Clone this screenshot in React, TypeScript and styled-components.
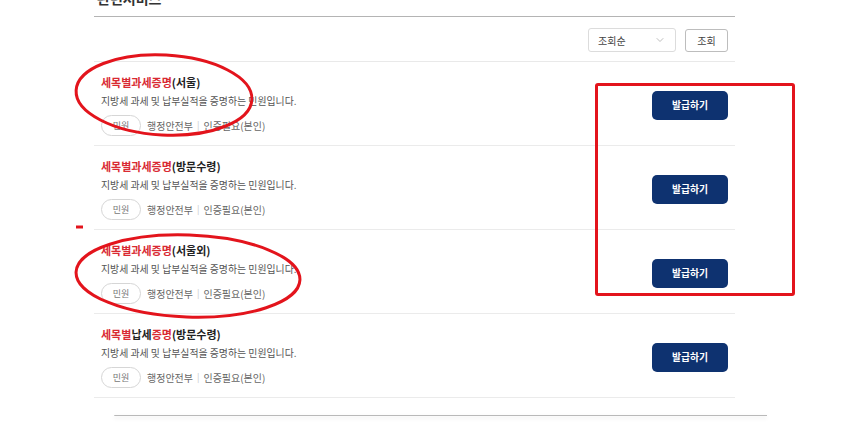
import { FC } from 'react';
import styled, { createGlobalStyle } from 'styled-components';
import { ChevronDown } from 'lucide-react';

const GlobalStyle = createGlobalStyle`
	html, body {
		margin: 0;
		padding: 0;
		background: #ffffff;
		overflow: hidden;
	}
	body {
		font-family: 'Noto Sans CJK KR', 'Noto Sans', sans-serif;
		color: #222;
	}
`;

interface ServiceItem {
	red: string;
	mid?: string;
	redTail?: string;
	rest: string;
}

const services: ServiceItem[] = [
	{ red: '세목별과세증명', rest: '(서울)' },
	{ red: '세목별과세증명', rest: '(방문수령)' },
	{ red: '세목별과세증명', rest: '(서울외)' },
	{ red: '세목별', mid: '납세', redTail: '증명', rest: '(방문수령)' },
];

const App: FC = () => {
	return (
		<>
			<GlobalStyle />
			<Page>
				<Content>
					<Heading>관련서비스</Heading>
					<Toolbar>
						<Select>
							<span>조회순</span>
							<ChevronDown size={12} strokeWidth={1.5} color="#a8a8a8" />
						</Select>
						<SearchButton>조회</SearchButton>
					</Toolbar>
					<List>
						{services.map((s, i) => (
							<Row key={i}>
								<Info>
									<Title>
										<Red>{s.red}</Red>
										{s.mid}
										{s.redTail && <Red>{s.redTail}</Red>}
										{s.rest}
									</Title>
									<Desc>지방세 과세 및 납부실적을 증명하는 민원입니다.</Desc>
									<Meta>
										<Badge>민원</Badge>
										<MetaText>행정안전부</MetaText>
										<Divider>|</Divider>
										<MetaText>인증필요(본인)</MetaText>
									</Meta>
								</Info>
								<IssueButton>발급하기</IssueButton>
							</Row>
						))}
					</List>
				</Content>
				<CardEdge />
				<Annotations width="865" height="429" viewBox="0 0 865 429">
					<ellipse cx="164" cy="95" rx="88" ry="40" transform="rotate(3 164 95)" />
					<ellipse cx="188" cy="276" rx="112" ry="41" transform="rotate(2 188 276)" />
					<rect x="596.5" y="84.5" width="197" height="210" rx="1.5" />
					<line x1="76" y1="227" x2="83" y2="227" />
				</Annotations>
			</Page>
		</>
	);
};

const Page = styled.div`
	position: relative;
	width: 865px;
	height: 429px;
	overflow: hidden;
	padding-left: 94px;
	box-sizing: border-box;
`;

const Content = styled.div`
	width: 641px;
`;

const Heading = styled.h2`
	margin: -12px 0 0 0;
	padding: 0 0 0 3px;
	font-size: 14px;
	line-height: 20px;
	height: 28px;
	font-weight: 700;
	color: #333;
	border-bottom: 1px solid #b4b4b4;
`;

const Toolbar = styled.div`
	display: flex;
	justify-content: flex-end;
	align-items: center;
	gap: 9px;
	padding: 11px 7px 9px 0;
	border-bottom: 1px solid #e9e9e9;
`;

const Select = styled.div`
	box-sizing: border-box;
	width: 88px;
	height: 24px;
	border: 1px solid #dcdcdc;
	border-radius: 3px;
	display: flex;
	align-items: center;
	justify-content: space-between;
	padding: 0 9px 0 9px;
	font-size: 10px;
	color: #444;
`;

const SearchButton = styled.button`
	box-sizing: border-box;
	width: 43px;
	height: 23px;
	border: 1px solid #bdbdbd;
	border-radius: 3px;
	background: #fff;
	font-family: inherit;
	font-size: 10px;
	color: #444;
	padding: 0;
`;

const List = styled.ul`
	list-style: none;
	margin: 0;
	padding: 0;
`;

const Row = styled.li`
	display: flex;
	align-items: center;
	justify-content: space-between;
	padding: 12px 7px 9px 7px;
	border-bottom: 1px solid #ebebeb;
`;

const Info = styled.div`
	display: flex;
	flex-direction: column;
`;

const Title = styled.div`
	font-size: 11px;
	line-height: 16px;
	font-weight: 700;
	color: #222;
`;

const Red = styled.span`
	color: #d92a33;
`;

const Desc = styled.p`
	margin: 3px 0 0 0;
	font-size: 9.9px;
	line-height: 16px;
	color: #555;
`;

const Meta = styled.div`
	display: flex;
	align-items: center;
	margin-top: 6px;
	font-size: 10px;
	color: #666;
`;

const Badge = styled.span`
	box-sizing: border-box;
	width: 40px;
	height: 21px;
	border: 1px solid #d6d6d6;
	border-radius: 11px;
	display: inline-flex;
	align-items: center;
	justify-content: center;
	font-size: 9px;
	color: #777;
	margin-right: 6px;
`;

const MetaText = styled.span`
	line-height: 16px;
`;

const Divider = styled.span`
	color: #c8c8c8;
	margin: 0 4px;
	font-size: 9px;
`;

const IssueButton = styled.button`
	width: 76px;
	height: 29px;
	border: none;
	border-radius: 5px;
	background: #0e3270;
	color: #fff;
	font-family: inherit;
	font-size: 9.8px;
	font-weight: 700;
	padding: 0;
`;

const CardEdge = styled.div`
	margin: 17px 0 0 20px;
	width: 653px;
	height: 1px;
	background: #b9b9b9;
	border-bottom-left-radius: 2px;
	box-shadow: 0 2px 4px rgba(0, 0, 0, 0.14);
`;

const Annotations = styled.svg`
	position: absolute;
	left: 0;
	top: 0;
	pointer-events: none;
	fill: none;
	stroke: #e3141c;
	stroke-width: 3;
`;

export default App;
